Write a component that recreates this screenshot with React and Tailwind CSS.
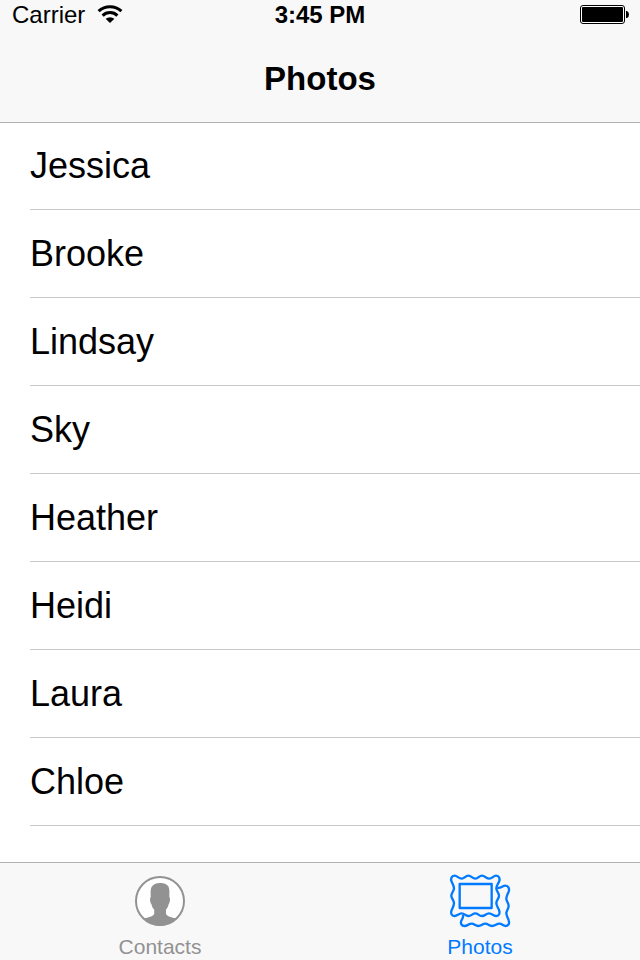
const names = ["Jessica", "Brooke", "Lindsay", "Sky", "Heather", "Heidi", "Laura", "Chloe"];

function WifiIcon() {
  return (
    <svg className="h-5 w-[26px]" viewBox="0 0 26 20" fill="none" stroke="black" strokeWidth="3" aria-hidden="true">
      <path d="M1.600 6.200C8 .2 18 .2 24.400 6.200" />
      <path d="M5.600 10.600C9.600 6.600 16.400 6.600 20.400 10.600" />
      <path d="M8.600 13.700Q13 10.600 17.400 13.700L13 18Z" fill="black" stroke="none" />
    </svg>
  );
}

function BatteryIcon() {
  return (
    <svg className="h-5 w-12 overflow-visible" viewBox="0 0 48 20" aria-label="Battery full" role="img">
      <rect x=".5" y=".5" width="44" height="18" rx="2.5" fill="white" stroke="black" />
      <rect x="2" y="2" width="41" height="15" rx="1" />
      <path d="M46 6H47Q49 7 49 9.500T47 13H46Z" />
    </svg>
  );
}

function ContactIcon() {
  return (
    <svg className="h-14 w-16" viewBox="0 0 64 56" aria-hidden="true">
      <circle cx="32" cy="29" r="24" fill="white" stroke="#929292" strokeWidth="2" />
      <path
        fill="#929292"
        d="M32 11C36 11 39.500 12.500 40.600 14.800C41.800 18 41.300 21.500 41.300 25C42.600 25.500 42 31 40.700 32C40.200 34.500 39.300 36.200 38 37.500V42C39 44.500 43.500 45 49 46.800Q41.500 54 32 54T15 46.800C20.500 45 25.200 44.500 26.200 42V37.500C24.700 36.200 23.900 34.500 23.400 32C22.100 31 21.500 25.500 22.800 25C22.600 21.500 22.300 18 23.400 15.300C25 12.500 28 11 32 11Z"
      />
    </svg>
  );
}

function FramesIcon() {
  return (
    <svg className="h-14 w-16" viewBox="24 21 192 168" fill="none" stroke="currentColor" strokeWidth="7" strokeLinejoin="round" aria-hidden="true">
      <path d="M44 32C52 32 56 41 65 41S76 32 85 32S97 41 106 41S117 32 126 32S139 41 148 41C157 41 160 32 168 32C178 32 181 42 177 50C174 57 169 62 169 70S177 84 177 92S169 106 169 114C169 122 174 128 177 135C181 144 178 153 168 153C160 153 156 145 147 145S135 153 126 153S114 145 106 145S94 153 85 153S74 145 65 145C56 145 52 153 44 153C34 153 31 144 35 135C38 128 42 122 42 114S34 100 34 92S42 78 42 70C42 62 38 57 35 50C31 42 34 32 44 32Z" />
      <rect x="59" y="57" width="96" height="72" />
      <path d="M172 68C182 72 187 62 196 62C206 62 209 72 206 80C203 87 199 93 199 101S206 115 206 123S199 137 199 145C199 153 204 158 206 166C209 175 206 183 197 183C189 183 186 176 178 176S165 183 156 183S144 176 136 176S124 183 115 183S103 176 95 176C86 176 82 183 74 183C64 183 61 175 64 167C67 160 71 157 69 150" />
    </svg>
  );
}

function Tab({ label, active, children }) {
  return (
    <button
      type="button"
      aria-current={active ? "page" : undefined}
      className={`flex flex-1 flex-col items-center gap-[7px] pt-[9px] text-[21px] leading-6 ${active ? "text-[#007aff]" : "text-[#929292]"}`}
    >
      {children}
      <span>{label}</span>
    </button>
  );
}

export default function App() {
  return (
    <div className="flex h-screen flex-col bg-white font-['Liberation_Sans',Arial,sans-serif] text-black">
      <header className="relative z-10 shrink-0 bg-[#f8f8f8] shadow-[0_1px_0_#b2b2b2]">
        <div className="grid grid-cols-3 items-center px-3 pt-px text-2xl leading-7">
          <div className="flex items-center gap-3">
            <span>Carrier</span>
            <WifiIcon />
          </div>
          <time className="text-center font-bold">3:45 PM</time>
          <div className="flex justify-end">
            <BatteryIcon />
          </div>
        </div>
        <h1 className="pt-[30px] pb-[23px] text-center text-[33px] leading-10 font-bold">Photos</h1>
      </header>
      <main className="min-h-0 flex-1 overflow-hidden">
        <ul className="pl-[30px]">
          {names.map((name) => (
            <li key={name} className="flex h-[88px] items-center border-b border-[#c8c7cc] text-4xl">
              {name}
            </li>
          ))}
        </ul>
      </main>
      <nav className="flex shrink-0 border-t border-[#b2b2b2] bg-[#f8f8f8] pb-px">
        <Tab label="Contacts">
          <ContactIcon />
        </Tab>
        <Tab label="Photos" active>
          <FramesIcon />
        </Tab>
      </nav>
    </div>
  );
}
